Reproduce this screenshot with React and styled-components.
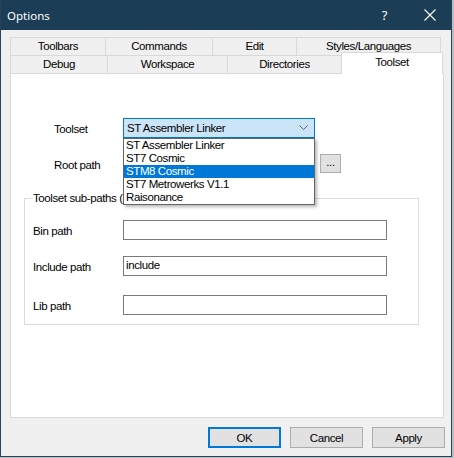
import styled, { createGlobalStyle } from 'styled-components';

const GlobalStyle = createGlobalStyle`
  html, body {
    margin: 0;
    padding: 0;
    background: #b9bcbf;
  }
  body {
    font-family: "Liberation Sans", Arial, sans-serif;
    font-size: 11.5px;
    letter-spacing: -0.4px;
    color: #000;
  }
  * { box-sizing: border-box; }
`;

const Win = styled.div`
  width: 452px;
  height: 457px;
  display: flex;
  flex-direction: column;
  background: #f0f0f0;
  border: 1px solid #27445a;
  border-top: none;
`;

const TitleBar = styled.div`
  height: 30px;
  flex: none;
  display: flex;
  align-items: center;
  background: #1b3d56;
  color: #fff;
  padding-left: 6px;
  font-family: "Noto Sans", "Open Sans", sans-serif;
  letter-spacing: 0;
`;

const Title = styled.div`
  flex: 1;
  font-size: 11.5px;
`;

const TitleBtn = styled.div`
  width: ${(p) => p.$w}px;
  height: 30px;
  display: flex;
  align-items: center;
  justify-content: center;
  font-size: 13px;
`;

const Body = styled.div`
  flex: 1;
  display: flex;
  flex-direction: column;
  padding: 7px 0 0 9px;
`;

const TabRow = styled.div`
  display: flex;
  align-items: flex-end;
  height: 18px;
  padding-left: 1px;
`;

const Tab = styled.div`
  width: ${(p) => p.$w}px;
  height: 18px;
  flex: none;
  display: flex;
  align-items: center;
  justify-content: center;
  background: #f0f0f0;
  border: 1px solid #d9d9d9;
  border-bottom: none;
  margin-left: -1px;
  line-height: 1;
  padding-top: 1px;
`;

const ActiveTab = styled(Tab)`
  position: relative;
  z-index: 2;
  height: 22px;
  margin-bottom: -1px;
  background: #fff;
  align-items: flex-start;
  padding-top: 4px;
`;

const Panel = styled.div`
  width: 434px;
  height: 345px;
  flex: none;
  background: #fff;
  border: 1px solid #d9d9d9;
  padding: 44px 0 0 13px;
`;

const TopRows = styled.div`
  display: flex;
  flex-direction: column;
  gap: 16px;
  padding-left: 30px;
`;

const Row = styled.div`
  display: flex;
  align-items: center;
  height: 20px;
  margin-top: ${(p) => p.$top || 0}px;
`;

const Label = styled.div`
  width: ${(p) => p.$w}px;
  flex: none;
  padding-top: 1px;
`;

const ComboWrap = styled.div`
  position: relative;
  width: 192px;
  height: 20px;
  z-index: 5;
`;

const Combo = styled.div`
  height: 20px;
  display: flex;
  align-items: center;
  justify-content: space-between;
  background: #cce4f7;
  border: 1px solid #0078d7;
  padding: 0 6px 0 3px;
`;

const DropList = styled.div`
  position: absolute;
  top: 20px;
  left: 0;
  width: 192px;
  background: #fff;
  border: 1px solid #646464;
  box-shadow: 2px 2px 3px rgba(0, 0, 0, 0.28);
`;

const Item = styled.div`
  height: 13px;
  line-height: 13px;
  padding-left: 2px;
  white-space: nowrap;
  background: ${(p) => (p.$sel ? '#0078d7' : 'transparent')};
  color: ${(p) => (p.$sel ? '#fff' : '#000')};
`;

const Field = styled.div`
  width: ${(p) => p.$w}px;
  height: 20px;
  flex: none;
  border: 1px solid #7a7a7a;
  background: #fff;
  padding-left: 2px;
  line-height: 17px;
`;

const Browse = styled.div`
  width: 21px;
  height: 19px;
  margin: -2px 0 0 5px;
  display: flex;
  align-items: center;
  justify-content: center;
  background: #e1e1e1;
  border: 1px solid #adadad;
  padding-bottom: 2px;
`;

const Group = styled.fieldset`
  width: 395px;
  height: 134px;
  margin: 17px 0 0 0;
  padding: 14px 0 0 8px;
  border: 1px solid #dcdcdc;
  min-width: 0;
`;

const Legend = styled.legend`
  padding: 0 1px 0 0;
  margin-left: 0;
  line-height: 15px;
  white-space: nowrap;
`;

const Footer = styled.div`
  display: flex;
  justify-content: flex-end;
  gap: 9px;
  padding: 9px 6px 0 0;
`;

const Button = styled.div`
  width: 73px;
  height: 21px;
  display: flex;
  align-items: center;
  justify-content: center;
  background: #e1e1e1;
  border: ${(p) => (p.$def ? '2px solid #0078d7' : '1px solid #adadad')};
  padding-top: 1px;
`;

const backTabs = [
  { name: 'Toolbars', w: 96 },
  { name: 'Commands', w: 108 },
  { name: 'Edit', w: 85 },
  { name: 'Styles/Languages', w: 145 },
];

const frontTabs = [
  { name: 'Debug', w: 98 },
  { name: 'Workspace', w: 121 },
  { name: 'Directories', w: 115 },
];

const toolsets = [
  'ST Assembler Linker',
  'ST7 Cosmic',
  'STM8 Cosmic',
  'ST7 Metrowerks V1.1',
  'Raisonance',
];

export default function App() {
  return (
    <>
      <GlobalStyle />
      <Win>
        <TitleBar>
          <Title>Options</Title>
          <TitleBtn $w={49}>?</TitleBtn>
          <TitleBtn $w={42}>
            <svg width="12" height="12" viewBox="0 0 12 12">
              <path d="M0.5 0.5 L11.5 11.5 M11.5 0.5 L0.5 11.5" stroke="#fff" strokeWidth="1.1" />
            </svg>
          </TitleBtn>
        </TitleBar>

        <Body>
          <TabRow>
            {backTabs.map((t) => (
              <Tab key={t.name} $w={t.w}>{t.name}</Tab>
            ))}
          </TabRow>
          <TabRow>
            {frontTabs.map((t) => (
              <Tab key={t.name} $w={t.w}>{t.name}</Tab>
            ))}
            <ActiveTab $w={102}>Toolset</ActiveTab>
          </TabRow>

          <Panel>
            <TopRows>
              <Row>
                <Label $w={69}>Toolset</Label>
                <ComboWrap>
                  <Combo>
                    <span>ST Assembler Linker</span>
                    <svg width="9" height="6" viewBox="0 0 9 6">
                      <path d="M0.5 0.5 L4.5 4.5 L8.5 0.5" fill="none" stroke="#606060" strokeWidth="1" />
                    </svg>
                  </Combo>
                  <DropList>
                    {toolsets.map((name) => (
                      <Item key={name} $sel={name === 'STM8 Cosmic'}>{name}</Item>
                    ))}
                  </DropList>
                </ComboWrap>
              </Row>
              <Row>
                <Label $w={69}>Root path</Label>
                <Field $w={192} />
                <Browse>...</Browse>
              </Row>
            </TopRows>

            <Group>
              <Legend>Toolset sub-paths (relative)</Legend>
              <Row>
                <Label $w={90}>Bin path</Label>
                <Field $w={264} />
              </Row>
              <Row $top={16}>
                <Label $w={90}>Include path</Label>
                <Field $w={264}>include</Field>
              </Row>
              <Row $top={19}>
                <Label $w={90}>Lib path</Label>
                <Field $w={264} />
              </Row>
            </Group>
          </Panel>

          <Footer>
            <Button $def>OK</Button>
            <Button>Cancel</Button>
            <Button>Apply</Button>
          </Footer>
        </Body>
      </Win>
    </>
  );
}
